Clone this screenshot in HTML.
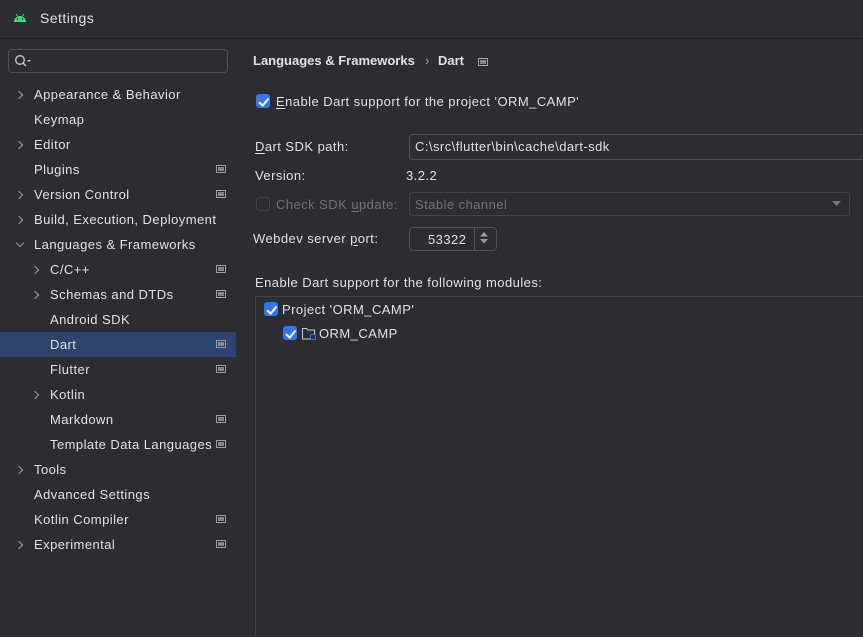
<!DOCTYPE html><html><head><style>
body{margin:0;width:863px;height:621px;background:#2b2d30;font-family:"Liberation Sans",sans-serif;font-size:13px;letter-spacing:.45px;color:#dfe1e5;position:relative;overflow:hidden}
.a{position:absolute;white-space:nowrap}
.it{position:absolute;left:0;width:236px;height:25px;line-height:25px}
.ch{position:absolute;width:5px;height:5px;border-right:1.3px solid #9a9da3;border-top:1.3px solid #9a9da3;transform:rotate(45deg);top:10px}
.chd{transform:rotate(135deg);top:8px}
.ic{position:absolute;left:216px;top:8px;width:8px;height:6px;border:1px solid #9a9da3;}
.ic:after{content:"";position:absolute;left:1px;top:1px;width:6px;height:4px;background:#9a9da3;opacity:.8}
.cb{position:absolute;width:14px;height:14px;background:#3574f0;border-radius:3px}
.cb:after{content:"";position:absolute;left:4.5px;top:1.5px;width:3.5px;height:7.5px;border-right:2px solid #fff;border-bottom:2px solid #fff;transform:rotate(40deg)}
.box{position:absolute;border:1px solid #4e5157;border-radius:4px;background:#2b2d30}
u{text-decoration:underline;text-underline-offset:2px}
b{letter-spacing:0}
</style></head><body>
<div class="a" style="left:0;top:0;width:863px;height:38px;border-bottom:1px solid #1e1f22"></div>
<svg class="a" style="left:13px;top:13px" width="14" height="9" viewBox="0 0 14 9"><path d="M1 9 A6 6 0 0 1 13 9Z" fill="#3ddc84"/><line x1="3" y1="1" x2="4.5" y2="3" stroke="#3ddc84"/><line x1="11" y1="1" x2="9.5" y2="3" stroke="#3ddc84"/><circle cx="4.5" cy="6" r=".8" fill="#2b2d30"/><circle cx="9.5" cy="6" r=".8" fill="#2b2d30"/></svg>
<div class="a" style="left:40px;top:10px;font-size:14px;color:#dfe1e5">Settings</div>
<div class="box" style="left:8px;top:49px;width:218px;height:22px"></div>
<svg class="a" style="left:14px;top:54px" width="20" height="14"><circle cx="6" cy="6" r="4.3" fill="none" stroke="#c8cacf" stroke-width="1.3"/><line x1="9" y1="9" x2="12" y2="12" stroke="#c8cacf" stroke-width="1.4"/><path d="M13 6h4l-2 2z" fill="#c8cacf"/></svg>

<div class="it" style="top:82px"><span class="ch" style="left:16px"></span><span class="a" style="left:34px">Appearance &amp; Behavior</span></div>
<div class="it" style="top:107px"><span class="a" style="left:34px">Keymap</span></div>
<div class="it" style="top:132px"><span class="ch" style="left:16px"></span><span class="a" style="left:34px">Editor</span></div>
<div class="it" style="top:157px"><span class="a" style="left:34px">Plugins</span><span class="ic"></span></div>
<div class="it" style="top:182px"><span class="ch" style="left:16px"></span><span class="a" style="left:34px">Version Control</span><span class="ic"></span></div>
<div class="it" style="top:207px"><span class="ch" style="left:16px"></span><span class="a" style="left:34px">Build, Execution, Deployment</span></div>
<div class="it" style="top:232px"><span class="ch chd" style="left:17px"></span><span class="a" style="left:34px">Languages &amp; Frameworks</span></div>
<div class="it" style="top:257px"><span class="ch" style="left:32px"></span><span class="a" style="left:50px">C/C++</span><span class="ic"></span></div>
<div class="it" style="top:282px"><span class="ch" style="left:32px"></span><span class="a" style="left:50px">Schemas and DTDs</span><span class="ic"></span></div>
<div class="it" style="top:307px"><span class="a" style="left:50px">Android SDK</span></div>
<div class="it" style="top:332px;background:#2e436e"><span class="a" style="left:50px">Dart</span><span class="ic"></span></div>
<div class="it" style="top:357px"><span class="a" style="left:50px">Flutter</span><span class="ic"></span></div>
<div class="it" style="top:382px"><span class="ch" style="left:32px"></span><span class="a" style="left:50px">Kotlin</span></div>
<div class="it" style="top:407px"><span class="a" style="left:50px">Markdown</span><span class="ic"></span></div>
<div class="it" style="top:432px"><span class="a" style="left:50px">Template Data Languages</span><span class="ic"></span></div>
<div class="it" style="top:457px"><span class="ch" style="left:16px"></span><span class="a" style="left:34px">Tools</span></div>
<div class="it" style="top:482px"><span class="a" style="left:34px">Advanced Settings</span></div>
<div class="it" style="top:507px"><span class="a" style="left:34px">Kotlin Compiler</span><span class="ic"></span></div>
<div class="it" style="top:532px"><span class="ch" style="left:16px"></span><span class="a" style="left:34px">Experimental</span><span class="ic"></span></div>

<div class="a" style="left:253px;top:53px"><b>Languages &amp; Frameworks</b></div>
<div class="a" style="left:425px;top:53px;color:#9a9da3">›</div>
<div class="a" style="left:438px;top:53px"><b>Dart</b></div>
<span class="ic" style="left:478px;top:58px"></span>

<div class="cb" style="left:256px;top:94px"></div>
<div class="a" style="left:276px;top:94px"><u>E</u>nable Dart support for the project 'ORM_CAMP'</div>

<div class="a" style="left:255px;top:139px"><u>D</u>art SDK path:</div>
<div class="box" style="left:409px;top:134px;width:470px;height:24px"></div>
<div class="a" style="left:415px;top:139px">C:\src\flutter\bin\cache\dart-sdk</div>
<div class="a" style="left:255px;top:168px">Version:</div>
<div class="a" style="left:406px;top:168px">3.2.2</div>

<div class="a" style="left:256px;top:197px;width:12px;height:12px;border:1px solid #43454a;border-radius:3px"></div>
<div class="a" style="left:276px;top:197px;color:#6f737a">Check SDK <u>u</u>pdate:</div>
<div class="box" style="left:409px;top:192px;width:439px;height:22px;border-color:#43454a"></div>
<div class="a" style="left:415px;top:197px;color:#6f737a">Stable channel</div>
<svg class="a" style="left:832px;top:201px" width="10" height="6"><path d="M0 0h9l-4.5 5z" fill="#6f737a"/></svg>

<div class="a" style="left:253px;top:231px">Webdev server <u>p</u>ort:</div>
<div class="box" style="left:409px;top:227px;width:86px;height:22px"></div>
<div class="a" style="left:474px;top:228px;width:1px;height:22px;background:#4e5157"></div>
<div class="a" style="left:428px;top:232px">53322</div>
<svg class="a" style="left:479px;top:231px" width="11" height="14"><path d="M1 5.5h8l-4-4.5zM1 8h8l-4 4.5z" fill="#9a9da3"/></svg>

<div class="a" style="left:255px;top:275px">Enable Dart support for the following modules:</div>
<div class="a" style="left:255px;top:296px;width:620px;height:340px;border:1px solid #43454a;border-right:none;border-bottom:none"></div>
<div class="cb" style="left:264px;top:302px"></div>
<div class="a" style="left:282px;top:302px">Project 'ORM_CAMP'</div>
<div class="cb" style="left:283px;top:326px"></div>
<svg class="a" style="left:301px;top:326px" width="16" height="15"><path d="M1.5 2.5h4l1.5 1.5h6.5v9h-12z" fill="none" stroke="#c8cacf"/><rect x="9.5" y="8.5" width="5" height="5" rx="1" fill="#2b2d30" stroke="#3574f0"/></svg>
<div class="a" style="left:319px;top:326px">ORM_CAMP</div>
</body></html>
